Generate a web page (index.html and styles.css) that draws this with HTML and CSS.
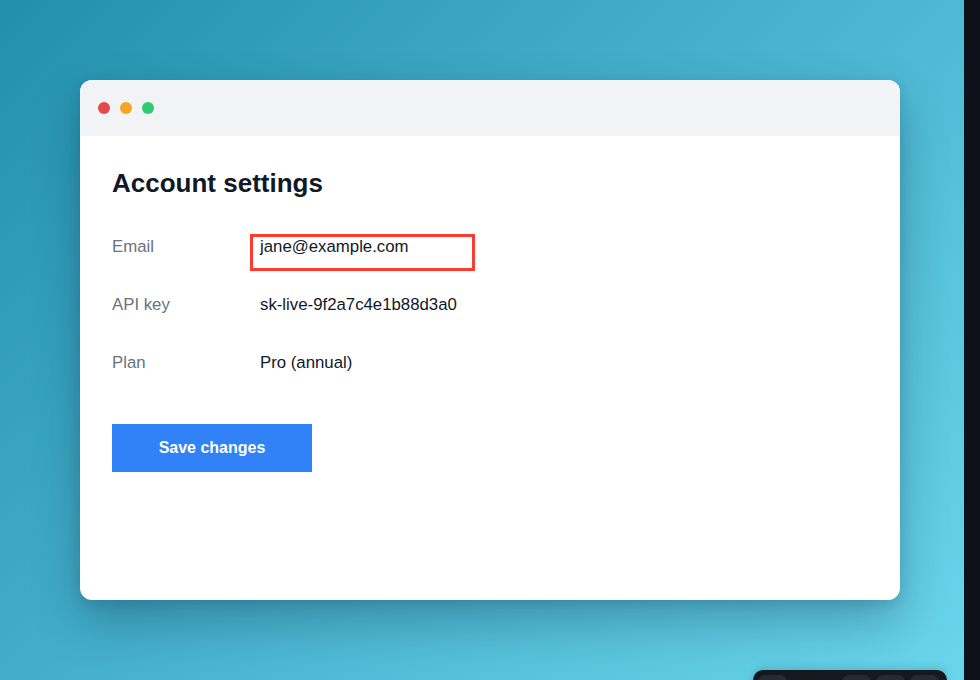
FILE: index.html
```html
<!DOCTYPE html>
<html>
<head>
<meta charset="utf-8">
<link rel="stylesheet" href="styles.css">
</head>
<body>
<div class="stage">
  <main class="desk">
    <section class="window">
      <header class="titlebar">
        <span class="dot red"></span>
        <span class="dot amber"></span>
        <span class="dot green"></span>
      </header>
      <div class="content">
        <h1 class="title">Account settings</h1>
        <div class="rows">
          <div class="row">
            <span class="label">Email</span>
            <span class="value highlighted">jane@example.com<span class="mark"></span></span>
          </div>
          <div class="row">
            <span class="label">API key</span>
            <span class="value">sk-live-9f2a7c4e1b88d3a0</span>
          </div>
          <div class="row">
            <span class="label">Plan</span>
            <span class="value">Pro (annual)</span>
          </div>
        </div>
        <button class="save">Save changes</button>
      </div>
    </section>
    <div class="dock">
      <span class="dock-btn"></span>
      <span class="dock-gap"></span>
      <span class="dock-btn"></span>
      <span class="dock-btn"></span>
      <span class="dock-btn"></span>
    </div>
  </main>
  <aside class="strip"></aside>
</div>
</body>
</html>
```

FILE: styles.css
```css
html, body {
  margin: 0;
  padding: 0;
  width: 980px;
  height: 680px;
  overflow: hidden;
  font-family: "Liberation Sans", Arial, Helvetica, sans-serif;
}

.stage {
  display: flex;
  width: 980px;
  height: 680px;
}

.desk {
  position: relative;
  width: 964px;
  height: 680px;
  padding: 80px 0 0 80px;
  box-sizing: border-box;
  background: linear-gradient(135deg, #2290ad 0%, #48b3cf 50%, #6ad6ec 100%);
  overflow: hidden;
}

.strip {
  width: 16px;
  height: 680px;
  background: #0e111a;
}

.window {
  width: 820px;
  height: 520px;
  background: #ffffff;
  border-radius: 12px;
  overflow: hidden;
  box-shadow: 0 22px 48px rgba(0, 30, 50, 0.28), 0 4px 12px rgba(0, 30, 50, 0.12);
}

.titlebar {
  height: 56px;
  background: #f2f3f5;
  display: flex;
  align-items: center;
  gap: 10px;
  padding-left: 18px;
}

.dot {
  width: 12px;
  height: 12px;
  border-radius: 50%;
}
.dot.red { background: #e5484d; }
.dot.amber { background: #f5a524; }
.dot.green { background: #2ecc71; }

.content {
  padding: 31px 32px 0 32px;
}

.title {
  margin: 0;
  font-size: 26px;
  line-height: 32px;
  font-weight: 700;
  color: #111827;
}

.rows {
  margin-top: 36px;
  display: flex;
  flex-direction: column;
  gap: 34px;
}

.row {
  display: flex;
  font-size: 16.8px;
  line-height: 24px;
}

.label {
  width: 148px;
  color: #6b7280;
}

.value {
  color: #111827;
  position: relative;
}

.mark {
  position: absolute;
  left: -10px;
  top: -1px;
  width: 225px;
  height: 37px;
  border: 3px solid #ff3b30;
  box-sizing: border-box;
}

.save {
  margin-top: 49px;
  width: 200px;
  height: 48px;
  border: none;
  border-radius: 0;
  background: #3182f6;
  color: #ffffff;
  font-family: "Liberation Sans", Arial, Helvetica, sans-serif;
  font-size: 16px;
  font-weight: 700;
  padding: 0;
}

.dock {
  position: absolute;
  left: 753px;
  top: 670px;
  width: 194px;
  height: 36px;
  box-sizing: border-box;
  padding: 5px;
  background: #16181f;
  border-radius: 10px;
  display: flex;
  gap: 5px;
  box-shadow: 0 -2px 8px rgba(0, 0, 0, 0.15);
}

.dock-btn {
  width: 29px;
  height: 26px;
  border-radius: 7px;
  background: #262931;
}

.dock-gap {
  width: 45px;
}
```
